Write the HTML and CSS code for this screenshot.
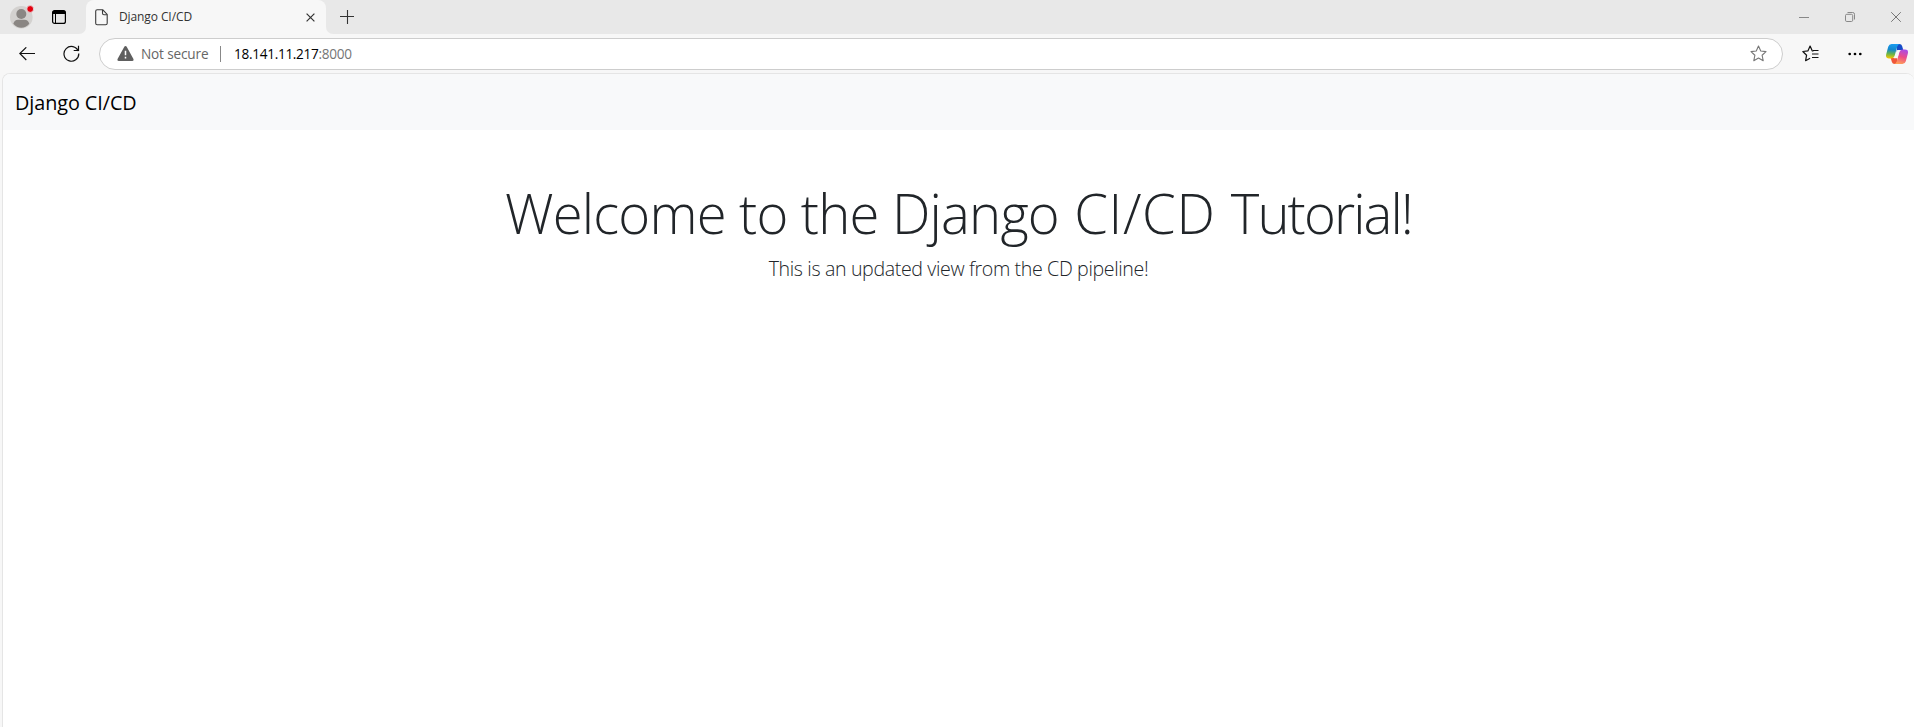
FILE: index.html
```html
<!DOCTYPE html>
<html lang="en">
<head>
<meta charset="utf-8">
<title>Django CI/CD</title>
<link rel="stylesheet" href="styles.css">
</head>
<body>
<div class="window">
  <header class="tabstrip">
    <div class="strip-left">
      <svg class="avatar" width="24" height="26" viewBox="0 0 24 26">
        <circle cx="11.3" cy="14.3" r="11.3" fill="#d3d1cf"/>
        <circle cx="11.3" cy="11" r="5" fill="#8a8683"/>
        <path d="M3.3 20.8q1.2-4 4.7-4h6.600q3.500 0 4.700 4q-3.400 4-8 4t-8-4z" fill="#8a8683"/>
        <circle cx="20.200" cy="6" r="3.400" fill="#e3000f" stroke="#e8e8e8" stroke-width=".8"/>
      </svg>
      <svg class="workspaces" width="14" height="14" viewBox="0 0 14 14">
        <rect x=".6" y=".6" width="12.800" height="12.800" rx="2" fill="none" stroke="#000" stroke-width="1.200"/>
        <path d="M.6 4V2.500Q.6.6 2.500.6h9Q13.400.6 13.400 2.500V4z"/>
        <path d="M3.500 4v9.500" stroke="#000"/>
      </svg>
    </div>
    <div class="tab">
      <svg class="page-icon" width="13" height="17" viewBox="0 0 13 17" fill="none" stroke="#3b3b3b" stroke-width="1.100">
        <path d="M2.200.8h5.600l4.400 4.600v8.800q0 1.600-1.600 1.600H2.200Q.7 15.800.7 14.200V2.300Q.7.8 2.200.8z"/><path d="M7.500 1v3.200q0 1.500 1.500 1.500h3"/>
      </svg>
      <span class="tab-title">Django CI/CD</span>
      <svg class="tab-close" width="9" height="9" viewBox="0 0 9 9"><path d="M.6.6l7.800 7.800M8.400.6L.6 8.400" stroke="#333" stroke-width="1.200"/></svg>
    </div>
    <div class="strip-right">
      <svg class="new-tab" width="14" height="14" viewBox="0 0 14 14"><path d="M0 6.500h14M7.500 0v14" stroke="#333" stroke-width="1.100"/></svg>
      <div class="window-buttons">
        <svg width="10" height="10" viewBox="0 0 10 10"><path d="M0 5.500h10" stroke="#888"/></svg>
        <svg width="10" height="10" viewBox="0 0 10 10" fill="none" stroke="#888"><rect x=".5" y="2.300" width="7.200" height="7.200" rx="1.300"/><path d="M2.500.5h5.200q1.800 0 1.800 1.800v5.200"/></svg>
        <svg width="10" height="10" viewBox="0 0 10 10"><path d="M.2.2l9.600 9.600M9.800.2L.2 9.800" stroke="#777"/></svg>
      </div>
    </div>
  </header>
  <div class="toolbar">
    <svg class="back" width="17" height="14" viewBox="0 0 17 14" fill="none" stroke="#111" stroke-width="1.150"><path d="M16 6.500H.8M7.300.3L.8 6.500l6.500 6.500"/></svg>
    <svg class="reload" width="17" height="17" viewBox="0 0 17 17" fill="none" stroke="#111" stroke-width="1.200"><path d="M15.300 6.100A7.400 7.400 0 1 0 15.800 8.500M15.500.7v4.800h-4.800"/></svg>
    <div class="address">
      <svg class="warning" width="17" height="15" viewBox="0 0 17 15"><path d="M8.500 0Q9.300 0 9.700.8l6.600 12q.9 2.200-1.200 2.200H1.900Q-.2 15 .7 12.800l6.600-12Q7.700 0 8.500 0z" fill="#5f5f5f"/><path d="M8.500 4.700v4.500M8.500 10.700v1.700" stroke="#fff" stroke-width="1.500"/></svg>
      <span class="security">Not secure</span>
      <span class="divider"></span>
      <span class="host">18.141.11.217</span><span class="port">:8000</span>
      <svg class="star" width="17" height="17" viewBox="0 0 17 17" fill="none" stroke="#777" stroke-width="1.100" stroke-linejoin="round"><path d="M8.500 1l2.250 5 5.250.6-3.900 3.650 1.100 5.400-4.700-2.700-4.700 2.700 1.100-5.400L1 6.600 6.250 6z"/></svg>
    </div>
    <svg class="favorites" width="17" height="17" viewBox="0 0 17 17" fill="none" stroke="#111" stroke-width="1.200" stroke-linejoin="round"><path d="M11.500 6L10.200 5.800 8.100 1 6 5.800.8 6.500l3.800 3.700-1 5.500 4.500-2.500M11 5.500H16.500M10 9H16.500M10 12.500H16.500"/></svg>
    <svg class="more" width="14" height="4" viewBox="0 0 14 4"><circle cx="1.700" cy="2" r="1.350"/><circle cx="7" cy="2" r="1.350"/><circle cx="12.300" cy="2" r="1.350"/></svg>
    <svg class="copilot" width="22" height="20" viewBox="0 0 22 20">
      <defs>
        <linearGradient id="cool" x1=".5" y1="0" x2=".4" y2="1"><stop offset="0" stop-color="#1a9cf0"/><stop offset=".4" stop-color="#1488cc"/><stop offset=".7" stop-color="#67b44b"/><stop offset="1" stop-color="#f3c500"/></linearGradient>
        <linearGradient id="warm" x1=".7" y1="0" x2=".4" y2="1"><stop offset="0" stop-color="#a94be8"/><stop offset=".5" stop-color="#ed4c88"/><stop offset="1" stop-color="#ffa057"/></linearGradient>
      </defs>
      <path d="M11 0h2.500q2 0 2.600 2l1.200 4h-3.800q-2 0-2.800 2z" fill="#164bc8"/>
      <path d="M11 20H8.500q-2 0-2.600-2l-1.200-4h3.800q2 0 2.800-2z" fill="#ef5639"/>
      <path d="M5.600 0H14q-2 .2-2.700 2.400L8.700 11.500Q7.900 14.400 5 14.400H3Q-.8 14.400.2 10.300L2.200 2.800Q3 0 5.600 0z" fill="url(#cool)"/>
      <path d="M16.400 20H8q2-.2 2.700-2.400l2.600-9.100Q14.100 5.600 17 5.600h2q3.800 0 2.800 4.100l-2 7.500q-.8 2.800-3.400 2.800z" fill="url(#warm)"/>
      <path d="M11.300 6h3.200q-1.100.8-1.500 2.300l-1.500 5.900H7.800q1-.8 1.400-2.200z" fill="#f7f7f7"/>
    </svg>
  </div>
  <main class="page">
    <nav class="navbar"><span class="brand">Django CI/CD</span></nav>
    <section class="welcome">
      <h1>Welcome to the Django <span class="wide">CI/CD</span> <span class="tight">Tutorial!</span></h1>
      <p>This is an updated view from the CD pipeline!</p>
    </section>
  </main>
</div>
</body>
</html>
```
FILE: styles.css
```css
* { box-sizing: border-box; }
body { margin: 0; font-family: "Open Sans", "Noto Sans", sans-serif; }
svg { display: block; flex: none; }
span, h1, p { white-space: nowrap; }
.window { width: 100%; height: 727px; display: flex; flex-direction: column; overflow: hidden; background: #f7f7f7; }
.tabstrip { height: 34px; flex: none; display: flex; background: linear-gradient(#e8e8e8 17px, #f7f7f7 17px); }
.strip-left { width: 86px; display: flex; background: #e8e8e8; border-bottom-right-radius: 7px; }
.avatar { margin: 3px 0 0 10px; }
.workspaces { margin: 10px 0 0 18px; }
.tab { width: 240px; display: flex; align-items: flex-start; background: #f7f7f7; border-radius: 8px 8px 0 0; }
.page-icon { margin: 9px 11px 0 9px; }
.tab-title { font-size: 12px; line-height: 17px; margin-top: 8px; color: #333; letter-spacing: -.1px; }
.tab-close { margin: 13px 11px 0 auto; }
.strip-right { flex: 1; display: flex; justify-content: space-between; background: #e8e8e8; border-bottom-left-radius: 7px; }
.new-tab { margin: 10px 0 0 14px; }
.window-buttons { display: flex; gap: 36px; padding: 12px 13px 0 0; }
.toolbar { height: 39px; flex: none; display: flex; align-items: center; }
.back { margin-left: 19px; }
.reload { margin-left: 27px; }
.address { margin-left: 19px; width: 1684px; height: 32px; display: flex; align-items: center; background: #fff; border: 1px solid #cdcdcd; border-radius: 16px; font-size: 13.6px; line-height: 20px; }
.warning { margin: 0 7px 0 17px; }
.security { color: #666; width: 67px; letter-spacing: -.15px; }
.divider { width: 1px; height: 16px; margin: 0 13px 0 12px; background: #888; }
.host { color: #000; letter-spacing: -.3px; }
.port { color: #767676; letter-spacing: -.3px; }
.star { margin: 0 15px 0 auto; }
.favorites { margin-left: 19px; }
.more { margin-left: 29px; }
.copilot { margin-left: 24px; }
.page { flex: 1; margin-left: 2px; background: #fff; border: 1px solid #e5e5e5; border-width: 1px 0 0 1px; border-radius: 8px 8px 0 0; overflow: hidden; }
.navbar { height: 56px; background: #f8f9fa; padding: 14px 0 0 12px; }
.brand { display: block; font-size: 19.8px; line-height: 30px; color: #000; letter-spacing: -.06px; }
.welcome { padding-top: 50px; text-align: center; color: #212529; }
h1 { margin: 0 0 7px; font-size: 54.4px; line-height: 67px; font-weight: 300; letter-spacing: -.8px; }
.wide { letter-spacing: .6px; margin-left: 2px; }
.tight { letter-spacing: -1.9px; margin-left: 2px; }
p { margin: 0; font-size: 19.6px; line-height: 30px; font-weight: 300; letter-spacing: -.36px; }
```
